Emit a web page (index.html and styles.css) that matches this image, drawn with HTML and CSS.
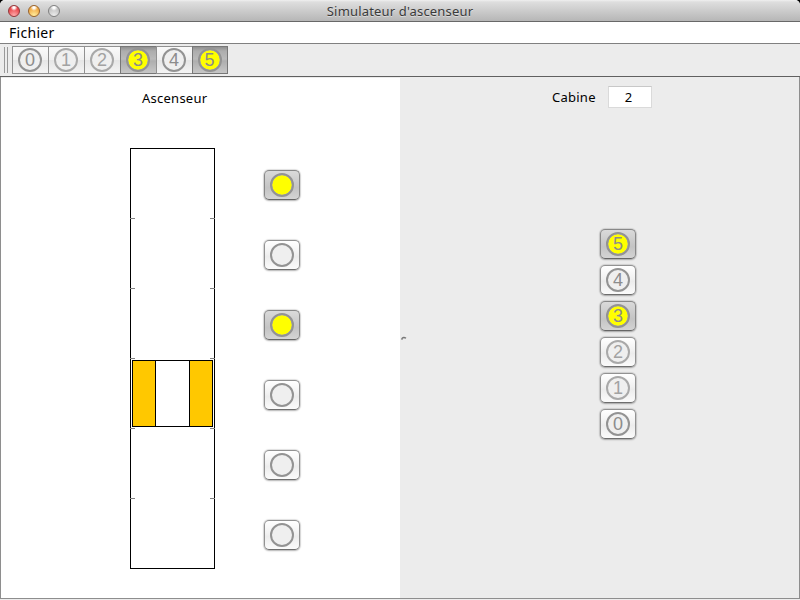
FILE: index.html
```html
<!DOCTYPE html>
<html lang="fr">
<head>
<meta charset="utf-8">
<title>Simulateur d'ascenseur</title>
<link rel="stylesheet" href="styles.css">
</head>
<body>
<div class="window">
  <header class="titlebar">
    <div class="lights"><i class="light red"></i><i class="light amber"></i><i class="light clear"></i></div>
    <h1>Simulateur d'ascenseur</h1>
  </header>
  <nav class="menubar"><span>Fichier</span></nav>
  <div class="toolbar">
    <div class="grip"></div>
    <button class="tool"><span class="lamp">0</span></button>
    <button class="tool"><span class="lamp dim">1</span></button>
    <button class="tool"><span class="lamp dim">2</span></button>
    <button class="tool pressed"><span class="lamp on">3</span></button>
    <button class="tool"><span class="lamp">4</span></button>
    <button class="tool pressed"><span class="lamp on">5</span></button>
  </div>
  <main class="split">
    <section class="left">
      <h2>Ascenseur</h2>
      <div class="building">
        <svg class="shaft" width="85" height="421" viewBox="0 0 85 421" shape-rendering="crispEdges">
          <rect x=".5" y=".5" width="84" height="420" fill="#fff" stroke="#000"/>
          <path d="M0 70.5h5M80 70.5h5M0 140.5h5M80 140.5h5M0 210.5h5M80 210.5h5M0 280.5h5M80 280.5h5M0 350.5h5M80 350.5h5" stroke="#808080"/>
          <rect x="2.5" y="212.5" width="80" height="66" fill="#fff" stroke="#000"/>
          <rect x="2.5" y="212.5" width="23" height="66" fill="#ffc800" stroke="#000"/>
          <rect x="59.5" y="212.5" width="23" height="66" fill="#ffc800" stroke="#000"/>
        </svg>
        <div class="calls">
          <button class="key pressed"><span class="lamp on"></span></button>
          <button class="key"><span class="lamp"></span></button>
          <button class="key pressed"><span class="lamp on"></span></button>
          <button class="key"><span class="lamp"></span></button>
          <button class="key"><span class="lamp"></span></button>
          <button class="key"><span class="lamp"></span></button>
        </div>
      </div>
    </section>
    <div class="divider"><svg width="6" height="5" viewBox="0 0 6 5"><path d="M1 3.8V2.4Q2.7 .5 5 2.3" fill="none" stroke="#777" stroke-width="1.4"/></svg></div>
    <section class="right">
      <div class="cabin-row"><label>Cabine</label><output class="field">2</output></div>
      <div class="keypad">
        <button class="key pressed"><span class="lamp on">5</span></button>
        <button class="key"><span class="lamp">4</span></button>
        <button class="key pressed"><span class="lamp on">3</span></button>
        <button class="key"><span class="lamp dim">2</span></button>
        <button class="key"><span class="lamp dim">1</span></button>
        <button class="key"><span class="lamp">0</span></button>
      </div>
    </section>
  </main>
</div>
</body>
</html>
```
FILE: styles.css
```css
* { box-sizing: border-box; }
body {
  margin: 0;
  background: #000;
  font-family: "Noto Sans", "Open Sans", sans-serif;
  font-size: 13px;
  color: #000;
}
h1, h2 { margin: 0; font-weight: 400; }
button { padding: 0; border: 0; background: none; display: flex; align-items: center; justify-content: center; }

.window {
  width: 800px;
  height: 600px;
  display: flex;
  flex-direction: column;
  background: #ececec;
  border-radius: 5px 5px 0 0;
  overflow: hidden;
}
.titlebar {
  flex: 0 0 22px;
  display: grid;
  grid-template-columns: 70px 1fr 70px;
  background: linear-gradient(#f0f0f0, #dedede 2px, #b6b6b6);
  border-bottom: 1px solid #686868;
}
.titlebar h1 {
  height: 21px;
  font-size: 13px;
  line-height: 22px;
  letter-spacing: .17px;
  text-align: center;
  color: #3a3a3a;
  text-shadow: 0 1px 0 rgba(255, 255, 255, .45);
}
.lights { display: flex; gap: 8px; height: 21px; padding: 5px 0 0 8px; }
.light { width: 12px; height: 12px; border-radius: 50%; border: 1px solid; }
.red { background: radial-gradient(circle at 50% 15%, #fff 0 10%, transparent 35%), radial-gradient(circle at 50% 95%, #ffaeae, #eb4c50 65%); border-color: #92373a; }
.amber { background: radial-gradient(circle at 50% 15%, #fff 0 10%, transparent 35%), radial-gradient(circle at 50% 95%, #fff0a0, #f2ad49 65%); border-color: #97622b; }
.clear { background: radial-gradient(circle at 50% 15%, #fff 0 10%, transparent 35%), radial-gradient(circle at 50% 95%, #ededed, #c4c4c4 65%); border-color: #808080; }

.menubar {
  flex: 0 0 22px;
  height: 22px;
  padding-left: 9px;
  background: #fff;
  border-bottom: 1px solid #808080;
  font-size: 14px;
  line-height: 21px;
  letter-spacing: .3px;
}
.toolbar {
  flex: 0 0 33px;
  display: flex;
  padding: 2px 0 0 4px;
  border-bottom: 1px solid #606060;
}
.grip { width: 4px; height: 26px; margin: 1px 4px 0 0; border: solid #999; border-width: 0 1px; }
.tool {
  width: 37px;
  height: 28px;
  margin-right: -1px;
  border: 1px solid #919191;
  background: linear-gradient(#fafafa, #f0f0f0 48%, #e6e6e6 52%, #f4f4f4);
}
.tool .lamp { margin-right: 1px; }
.tool:last-child { width: 36px; }
.tool.pressed {
  border-color: #777;
  background: linear-gradient(#8f8f8f, #adadad 4px, #bababa 46%, #aeaeae 54%, #c6c6c6);
}

.lamp {
  width: 24px;
  height: 24px;
  border: 2px solid #939393;
  border-radius: 50%;
  background: #efefef;
  color: #8c8c8c;
  font: 18px/20px "Liberation Sans", Arial, sans-serif;
  text-align: center;
}
.lamp.dim { border-color: #a9a9a9; color: #a2a2a2; }
.lamp.on { background: radial-gradient(circle, #ff0 9.3px, #b0b0a8 9.9px); }

.split {
  flex: 1;
  display: grid;
  grid-template-columns: 399px 9px 1fr;
  margin-bottom: 1px;
  padding-top: 1px;
  border: solid #8e8e8e;
  border-width: 0 1px 1px;
}
.left { background: #fff; }
.left h2 {
  padding: 10px 0 0 141px;
  font-size: 13px;
  line-height: 20px;
  letter-spacing: .25px;
}
.building { display: flex; gap: 49px; padding: 40px 0 0 129px; }
.shaft { display: block; }
.calls { display: flex; flex-direction: column; gap: 40px; padding-top: 22px; }
.key {
  width: 36px;
  height: 30px;
  border: 1px solid #929292;
  border-bottom-color: #6e6e6e;
  border-radius: 5px;
  background: linear-gradient(#fff, #f1f1f1 45%, #ececec 55%, #fbfbfb);
  box-shadow: 0 0 1px 1px rgba(0, 0, 0, .12), 0 1px 2px rgba(0, 0, 0, .2);
}
.key.pressed { background: linear-gradient(#dadada, #cbcbcb 40%, #c4c4c4 60%, #d4d4d4); border-color: #888 #888 #666; }

.divider { display: flex; padding-top: 258px; padding-left: 1px; }
.right { display: flex; flex-direction: column; align-items: flex-start; }
.cabin-row { display: flex; align-items: center; gap: 12px; margin-top: 8px; padding-left: 143px; letter-spacing: .25px; }
.field {
  width: 44px;
  height: 22px;
  border: 1px solid #dadada;
  border-top-color: #c8c8c8;
  background: #fff;
  line-height: 20px;
  padding-left: 16px;
}
.keypad { display: flex; flex-direction: column; gap: 6px; margin-top: 121px; padding-left: 191px; }
```
